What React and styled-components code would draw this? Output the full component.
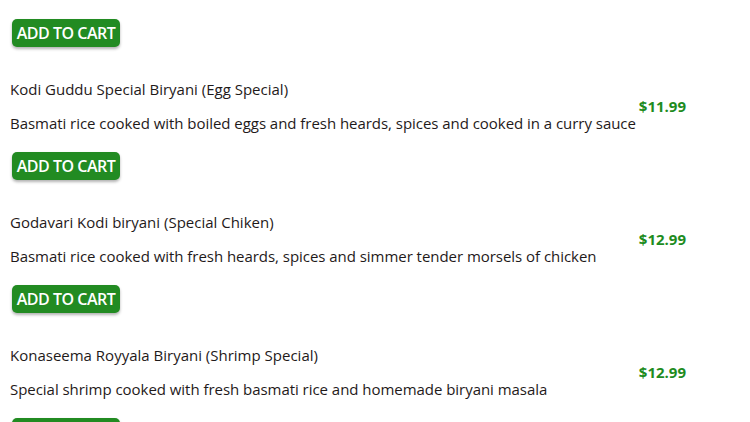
import React from "react";
import styled, { createGlobalStyle } from "styled-components";

const Global = createGlobalStyle`
  html, body { margin: 0; padding: 0; background: #fff; }
  body { font-family: "Open Sans", "Noto Sans", sans-serif; color: #1f1a1a; }
`;

const Page = styled.main`
  padding: 19px 0 0 10px;
  width: 676px;
`;

const Item = styled.section`
  display: flex;
  flex-direction: column;
  align-items: flex-start;
  margin-top: 32px;
`;

const Row = styled.div`
  display: flex;
  align-items: center;
  justify-content: space-between;
  width: 100%;
`;

const Info = styled.div`
  display: flex;
  flex-direction: column;
  gap: 14px;
`;

const Title = styled.h3`
  margin: 0;
  font-size: 15px;
  line-height: 20px;
  font-weight: 500;
`;

const Desc = styled.p`
  margin: 0;
  font-size: 15px;
  line-height: 20px;
  font-weight: 400;
  letter-spacing: -0.04px;
`;

const Price = styled.span`
  color: #1e8c1e;
  font-size: 15px;
  font-weight: 700;
  line-height: 20px;
`;

const CartButton = styled.button`
  margin: ${(p) => (p.$first ? "0" : "19px")} 0 0 2px;
  width: 108px;
  height: 28px;
  padding: 0;
  border: none;
  border-radius: 5px;
  background: #228b22;
  color: #fff;
  font-family: "Open Sans", "Noto Sans", sans-serif;
  font-size: 16px;
  font-weight: 600;
  letter-spacing: -0.5px;
  box-shadow: 0 2px 3px rgba(0, 0, 0, 0.3);
  cursor: pointer;
`;

const items = [
  {
    title: "Kodi Guddu Special Biryani (Egg Special)",
    desc: "Basmati rice cooked with boiled eggs and fresh heards, spices and cooked in a curry sauce",
    price: "$11.99",
  },
  {
    title: "Godavari Kodi biryani (Special Chiken)",
    desc: "Basmati rice cooked with fresh heards, spices and simmer tender morsels of chicken",
    price: "$12.99",
  },
  {
    title: "Konaseema Royyala Biryani (Shrimp Special)",
    desc: "Special shrimp cooked with fresh basmati rice and homemade biryani masala",
    price: "$12.99",
  },
];

export default function App() {
  return (
    <>
      <Global />
      <Page>
        <CartButton $first>ADD TO CART</CartButton>
        {items.map((it) => (
          <Item key={it.title}>
            <Row>
              <Info>
                <Title>{it.title}</Title>
                <Desc>{it.desc}</Desc>
              </Info>
              <Price>{it.price}</Price>
            </Row>
            <CartButton>ADD TO CART</CartButton>
          </Item>
        ))}
      </Page>
    </>
  );
}
